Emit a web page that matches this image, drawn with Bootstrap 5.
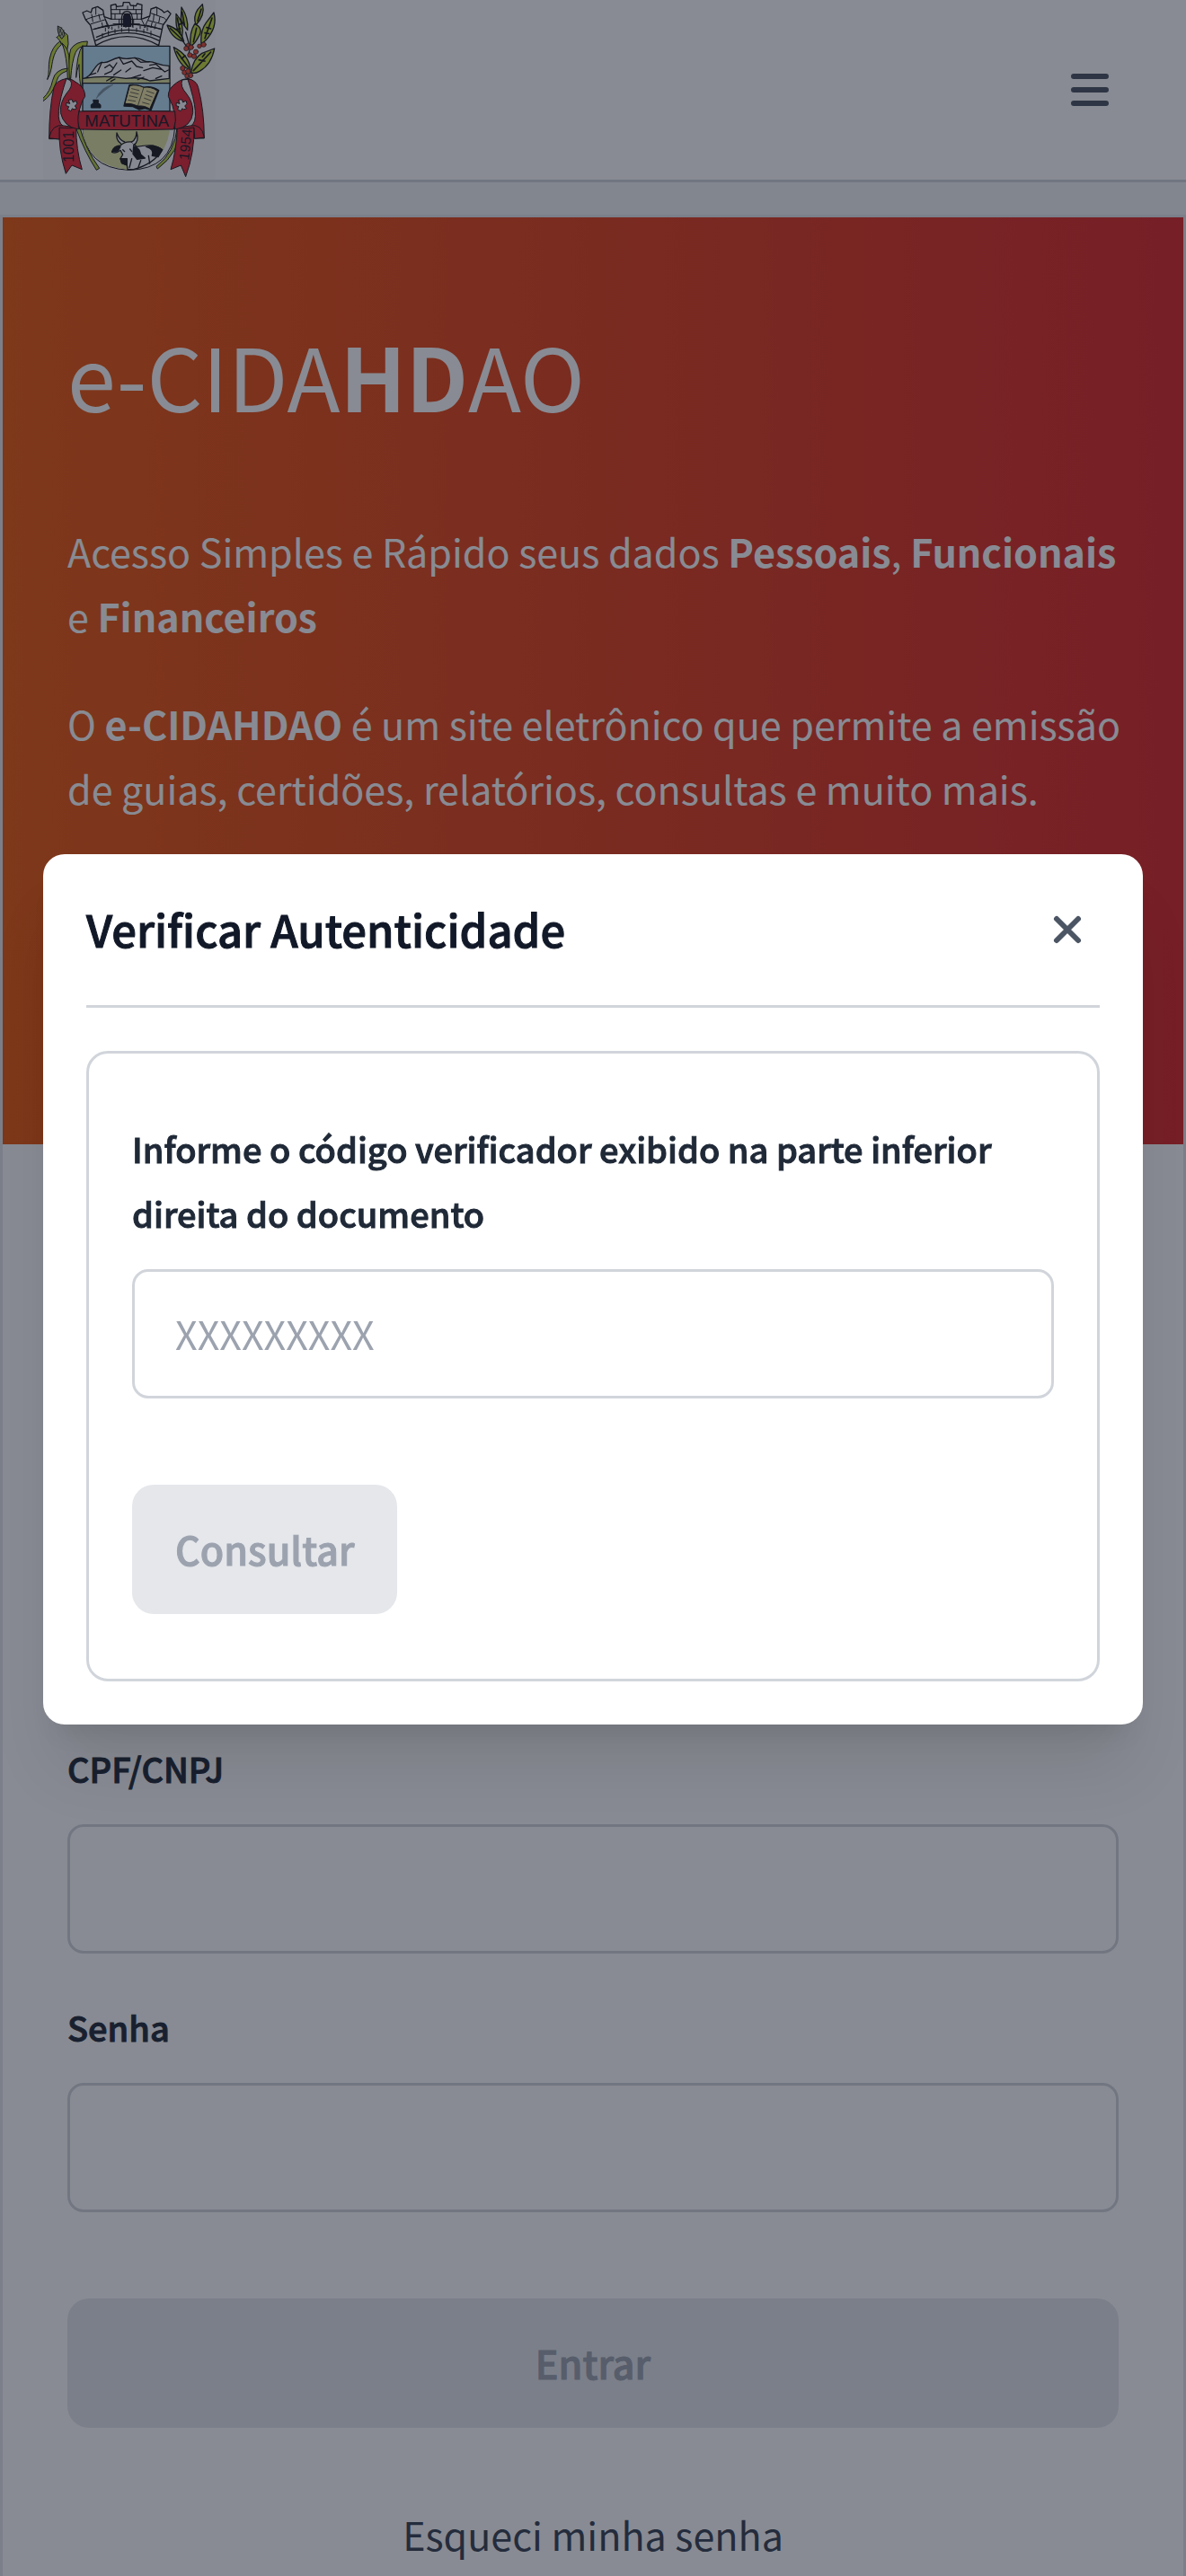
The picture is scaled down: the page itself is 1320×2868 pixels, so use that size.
<!DOCTYPE html>
<html lang="pt-BR">
<head>
<meta charset="utf-8">
<meta name="viewport" content="width=device-width, initial-scale=1">
<title>e-CIDAHDAO</title>
<link rel="stylesheet" href="https://cdn.jsdelivr.net/npm/bootstrap@5.3.0/dist/css/bootstrap.min.css">
<style>
  body { font-family: "Noto Sans CJK JP", "Noto Sans", sans-serif; font-size: 43px; line-height: 72px; background: #f3f4f6; color: #1f2937; }
  strong { font-weight: 700; }
  .topbar { background: #fff; border-bottom: 3px solid #d1d5db; height: 203px; padding: 0 48px; }
  .crest { width: 192px; height: 200px; display: block; }
  .menu-btn { padding: 18px; margin-right: 10px; color: #4b5563; line-height: 1; }
  .icon-box { width: 60px; height: 60px; display: block; }
  .panel { margin-top: 36px; border: 3px solid #e5e7eb; background: #fff; }
  .hero { background: linear-gradient(to right, #ea580c, #dc2626); color: #fff; padding: 115px 60px 0 72px; height: 1032px; }
  .hero-title { font-size: 97px; line-height: 120px; font-weight: 400; margin-bottom: 100px; }
  .hero p { margin-bottom: 48px; }
  .login { padding: 0 72px 72px; margin-top: 659px; }
  .semi { font-weight: 500; -webkit-text-stroke: 1px currentColor; }
  .field-label { font-size: 38px; line-height: 72px; margin-bottom: 26px; display: block; }
  .field-box { height: 144px; border: 3px solid #d1d5db; border-radius: 18px; padding: 0 45px 2px; font-size: 43px; background: #fff; }
  .field-box::placeholder { color: #9ca3af; }
  .field-gap { margin-bottom: 46px; }
  .action { height: 144px; border: 0; border-radius: 24px; font-size: 43px; line-height: 72px; padding: 0 48px 3px; }
  .action:disabled { background: #e5e7eb; color: #9ca3af; opacity: 1; }
  .enter { margin-top: 50px; }
  .forgot { color: #374151; text-decoration: none; margin-top: 82px; }
  .veil { background: rgba(17, 24, 39, .5); padding: 3px 48px 0; }
  .veil .modal-dialog { max-width: none; margin: 0; min-height: 100%; }
  .veil .modal-content { border: 0; border-radius: 24px; padding: 48px; box-shadow: 0 60px 75px -15px rgba(0, 0, 0, .1), 0 24px 30px -18px rgba(0, 0, 0, .1); }
  .veil .modal-header { padding: 0 0 48px; border-bottom: 3px solid #d1d5db; border-radius: 0; }
  .veil .modal-title { font-size: 49px; line-height: 70px; color: #111827; }
  .close-btn { width: 72px; height: 72px; padding: 5px; color: #4b5563; line-height: 1; }
  .verify { margin-top: 48px; border: 3px solid #d1d5db; border-radius: 24px; padding: 70px 48px 72px; }
  .verify .field-box { margin-bottom: 96px; }
</style>
<script src="https://cdn.jsdelivr.net/npm/bootstrap@5.3.0/dist/js/bootstrap.bundle.min.js" defer></script>
</head>
<body class="vh-100 overflow-hidden">
<header class="topbar d-flex align-items-start justify-content-between">
  <a href="#" aria-label="Matutina">
  <svg class="crest" viewBox="144 0 576 600" role="img" aria-label="Brasão de Matutina">
    <rect x="144" y="0" width="576" height="600" fill="#fbfbfb"/>
    <g stroke="#1b1b1b" stroke-linejoin="round" stroke-linecap="round">
      <!-- corn stalk -->
      <g fill="#c6dc3c" stroke-width="3">
        <path d="M204 150C180 170 176 200 172 225Q168 250 158 266C166 246 160 220 166 195Q174 155 200 138Z"/>
        <path d="M190 125Q212 95 226 118Q232 145 222 178Q210 145 190 125Z"/>
        <path d="M208 145Q226 160 230 185L236 262L226 262Q224 190 208 145Z"/>
        <path d="M232 262Q228 190 236 165Q252 138 292 138L290 154Q262 152 252 176Q240 205 236 262Z"/>
        <path d="M254 258Q256 180 276 152L276 262L272 296Q264 270 264 215Q256 235 254 258Z"/>
        <path d="M144 328Q168 306 176 268Q184 232 226 228L222 238Q196 246 190 268Q176 316 144 338Z"/>
      </g>
      <path d="M193 88Q214 92 216 118L206 130Q190 112 193 88Z" fill="#b9c09a" stroke-width="3"/>
      <path d="M197 95L212 122M206 92L198 110M214 102L202 120" fill="none" stroke-width="2"/>
      <!-- coffee branch -->
      <path d="M602 124L626 160M620 108L632 150M636 154L630 180" fill="none" stroke-width="4"/>
      <g fill="#c6dc3c" stroke-width="4">
        <path d="M606 24Q630 60 626 100Q612 85 604 64Z"/>
        <path d="M588 46Q616 76 608 124Q588 100 588 74Z"/>
        <path d="M558 84Q602 96 614 138Q576 132 558 84Z"/>
        <path d="M676 14Q686 50 654 84Q644 56 660 32Z"/>
        <path d="M650 80Q682 94 662 124Q650 148 636 154Q632 108 650 80Z"/>
        <path d="M714 42Q724 80 704 112Q688 138 672 146Q668 104 688 76Z"/>
        <path d="M580 158Q632 184 636 234Q596 220 580 158Z"/>
        <path d="M716 162Q706 216 666 238Q648 248 638 242Q644 196 674 178Z"/>
      </g>
      <path d="M608 40L616 84M592 60L602 110M568 94L608 132M672 30L660 70M656 94L646 140M708 60L684 128M590 172L630 226M704 174L646 236M596 84l14 -8M602 96l-12 2M690 92l14 4M684 110l14 2M664 200l20 4M676 190l8 -10M606 196l12 -10" fill="none" stroke-width="5"/>
      <g fill="#ea4a35" stroke-width="2">
        <circle cx="622" cy="162" r="8"/><circle cx="638" cy="158" r="8"/><circle cx="628" cy="150" r="6"/><circle cx="666" cy="154" r="7"/><circle cx="680" cy="149" r="8"/><circle cx="654" cy="173" r="8"/><circle cx="634" cy="184" r="8"/><circle cx="648" cy="188" r="8"/><circle cx="610" cy="228" r="8"/><circle cx="616" cy="242" r="8"/><circle cx="628" cy="238" r="8"/><circle cx="636" cy="252" r="8"/><circle cx="624" cy="254" r="7"/>
      </g>
      <!-- mural crown -->
      <g fill="#fbfbfb" stroke-width="4">
        <path d="M320 152L302 84L286 66L276 42L290 36L304 42L308 28L326 22L344 34L348 56L372 64L370 18L386 14L390 22L410 20L412 8L432 8L436 18L454 20L458 12L474 16L472 64L500 54L504 30L522 24L540 34L548 42L560 36L570 46L556 68L544 84L530 152Q424 92 320 152Z"/>
        <path d="M322 124Q424 76 534 124M312 98Q424 64 540 98M318 136Q424 84 532 136" fill="none"/>
        <path d="M286 66Q300 58 344 48M348 56L366 94M472 64L486 92M500 54L482 92M504 44L548 60L556 68M370 32L474 32M370 46L474 46M372 64L410 64M436 64L472 64M378 80L410 80M436 80L466 80M388 18V32M400 32V46M384 46V64M398 64V80M446 18V32M426 20V32M454 32V46M458 46V64M446 64V80M320 26V48M306 48L310 72M330 48L334 66M304 80L350 66M312 98L360 84M352 66L362 96M524 28V50M514 48L512 70M534 56L530 76M494 68L546 82M488 84L540 98M340 76L344 92M508 74L504 92M520 80L516 96M342 112V124M362 104V116M384 98V110M406 94V106M430 92V106M456 94V106M480 98V110M504 104V118M352 94V104M374 90V98M396 86V94M420 84V92M444 84V92M468 88V96M492 92V102" fill="none" stroke-width="3"/>
        <path d="M412 88V62Q412 46 424 46Q436 46 436 62V88Z" fill="#1b1b2b"/>
        <path d="M406 88V60Q408 38 424 38Q440 38 442 60V88" fill="none"/>
      </g>
      <!-- stems below the shield -->
      <path d="M252 424Q284 510 322 568L332 562Q286 500 266 424Z M592 424Q584 510 522 556L526 564Q600 510 604 424Z" fill="#b9cf45" stroke-width="3"/>
      <!-- shield -->
      <path d="M276 424H584Q576 566 430 568Q284 562 276 424Z" fill="#fbfbfb" stroke-width="3"/>
      <path d="M276 434H566V440Q556 500 516 535L424 566Q310 556 280 460Z" fill="#dfe29e" stroke="none"/>
      <path d="M276 154H567V372H276Z" fill="#b8dff5" stroke-width="4"/>
      <path d="M278 262Q360 246 430 262Q500 266 565 262V277H278Z" fill="#dfe29e" stroke="none"/>
      <path d="M278 262C310 258 312 215 340 208C365 214 368 196 398 192C420 200 424 196 450 193C480 196 480 210 498 206C520 206 530 220 565 220V262L500 270Q470 256 420 262Q350 250 278 262Z" fill="#fbfbfb" stroke-width="4"/>
      <path d="M340 208L326 240M350 226L366 216L376 226M390 210L372 238L350 248M398 192L412 214L440 204L456 222L476 226M436 228L420 240M404 234L380 250M450 193L470 208L498 206M480 236L510 226L540 232M500 218L520 214L550 240L562 234M440 260L470 250M380 256L356 270M460 266L480 258M520 262L540 254M300 250L320 244M384 264L370 272" fill="none" stroke-width="4"/>
      <path d="M276 278H567" stroke-width="4"/>
      <!-- ink pot, quill and book -->
      <path d="M322 328Q334 292 378 282Q350 300 322 328Z" fill="#7b929f" stroke="#7b929f" stroke-width="2"/>
      <path d="M312 334H328V344L336 350V360H304V350L312 344Z" fill="#17202a" stroke-width="3"/>
      <path d="M432 284Q456 280 480 292Q506 286 530 302L504 368L484 362L464 366L444 356L414 354Z" fill="#1b1b1b" stroke-width="4"/>
      <path d="M434 286Q456 280 480 292Q504 288 526 304L500 364Q484 352 460 354Q440 344 418 346Z" fill="#f0e6a4" stroke-width="3"/>
      <path d="M480 292L460 354M440 296L464 302M436 308L462 314M432 320L458 326M428 334L452 338M490 304L514 312M486 316L508 324M482 328L504 336M476 342L498 348" fill="none" stroke-width="2"/>
      <!-- ox -->
      <g stroke-width="4">
        <path d="M402 486Q416 472 440 474L456 490Q490 484 510 486Q530 490 542 500Q514 548 446 566L426 566L424 552L406 544L402 530L410 516L402 502Q388 514 374 508Q378 488 402 486Z" fill="#fbfbfb"/>
        <path d="M404 480Q386 468 390 444Q398 468 416 474M440 474Q456 464 456 440Q466 474 446 484" fill="#fbfbfb"/>
        <path d="M402 530H424L424 552L408 546Z M446 488Q466 494 470 516L484 528L458 532L444 514Z M488 490Q520 484 542 500L528 524L508 520Q516 498 488 490Z M374 506Q384 490 402 490L394 504Z" fill="#1b1b1b"/>
        <path d="M440 530L432 560M470 536L462 558M410 500L416 506M434 498L440 506M496 520L500 546" fill="none"/>
      </g>
      <!-- ribbon -->
      <g fill="#e52535" stroke-width="3">
        <path d="M222 262Q186 270 180 292Q164 360 164 464H198L210 420Q176 400 222 262Z"/>
        <path d="M198 424Q194 500 220 580L240 552L274 566Q254 500 254 424Z"/>
        <path d="M164 460Q174 412 214 420L254 426Q234 430 198 426L198 464Z"/>
        <path d="M222 262Q240 262 262 280Q284 296 284 322Q270 340 262 384V432Q212 424 202 376Q200 342 222 312Q246 286 236 270Z"/>
        <path d="M626 262Q656 268 662 292Q682 370 682 462H648L638 420Q672 400 626 262Z"/>
        <path d="M648 424Q650 510 620 590L604 552L570 566Q590 500 592 424Z"/>
        <path d="M682 458Q674 412 634 420L592 428Q620 432 648 426L650 462Z"/>
        <path d="M632 264Q612 260 590 276Q560 296 562 322Q578 350 584 384V432Q640 424 644 376Q646 342 622 312Q600 288 608 268Z"/>
        <path d="M264 372Q424 368 584 372Q590 402 580 432Q424 436 266 432Q256 402 264 372Z"/>
      </g>
      <path id="rosette" d="M230 334L240 332L244 342L254 336L257 347L250 354L256 362L246 366L242 362L236 371L226 365L230 356L221 353L222 343L232 346Z" fill="#fbfbfb" stroke-width="3"/>
      <use href="#rosette" x="367"/>
    </g>
    <g font-family="Liberation Sans, Arial, sans-serif" fill="#241722">
      <text x="424" y="422" font-size="56" text-anchor="middle">MATUTINA</text>
      <text transform="translate(247 542) rotate(-90)" font-size="47">1001</text>
      <text transform="translate(630 536) rotate(-84)" font-size="47">1954</text>
    </g>
  </svg>
  </a>
  <button type="button" class="btn menu-btn align-self-center" aria-label="Abrir menu">
    <svg class="icon-box" viewBox="0 0 20 20" fill="none" stroke="currentColor" stroke-width="2" stroke-linecap="round"><path d="M4 5H16M4 10H16M4 15H16"/></svg>
  </button>
</header>
<main class="panel">
  <section class="hero">
    <h1 class="hero-title">e-CIDA<strong>HD</strong>AO</h1>
    <p>Acesso Simples e Rápido seus dados <strong>Pessoais</strong>, <strong>Funcionais</strong> e <strong>Financeiros</strong></p>
    <p>O <strong>e-CIDAHDAO</strong> é um site eletrônico que permite a emissão de guias, certidões, relatórios, consultas e muito mais.</p>
  </section>
  <form class="login d-flex flex-column">
    <label class="field-label semi" for="doc">CPF/CNPJ</label>
    <input class="form-control field-box field-gap" id="doc" type="text">
    <label class="field-label semi" for="pwd">Senha</label>
    <input class="form-control field-box field-gap" id="pwd" type="password">
    <button class="btn action semi w-100 enter" type="submit" disabled>Entrar</button>
    <a class="forgot align-self-center" href="#">Esqueci minha senha</a>
  </form>
</main>
<div class="modal veil d-block" role="dialog" aria-modal="true" aria-labelledby="verify-title">
  <div class="modal-dialog modal-dialog-centered">
    <div class="modal-content">
      <div class="modal-header align-items-start">
        <h2 class="modal-title semi" id="verify-title">Verificar Autenticidade</h2>
        <button type="button" class="btn close-btn" aria-label="Fechar">
          <svg class="icon-box" viewBox="0 0 20 20" fill="none" stroke="currentColor" stroke-width="2" stroke-linecap="round"><path d="M6 6L14 14M14 6L6 14"/></svg>
        </button>
      </div>
      <form class="verify">
        <label class="field-label semi" for="code">Informe o código verificador exibido na parte inferior direita do documento</label>
        <input class="form-control field-box" id="code" type="text" placeholder="XXXXXXXXX">
        <button class="btn action semi d-block" type="submit" disabled>Consultar</button>
      </form>
    </div>
  </div>
</div>
</body>
</html>
